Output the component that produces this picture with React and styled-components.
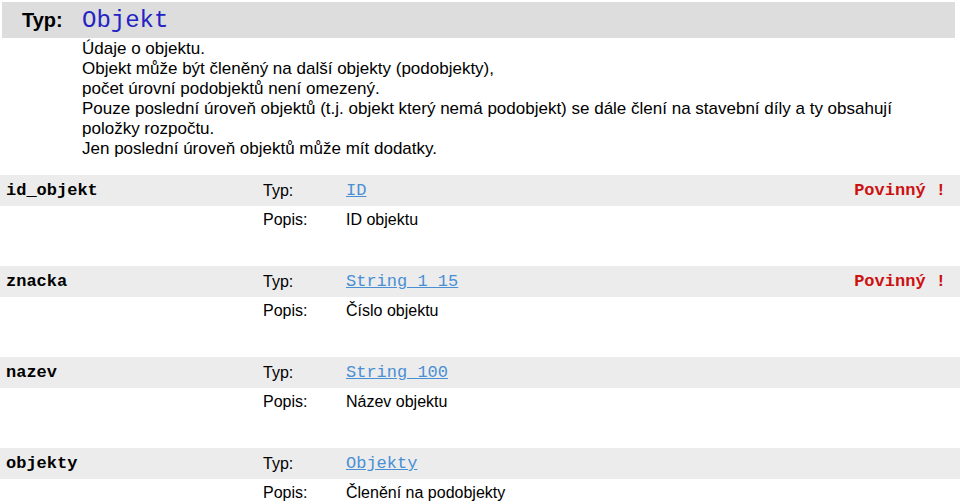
import React from "react";
import styled, { createGlobalStyle } from "styled-components";

const GlobalStyle = createGlobalStyle`
  body {
    margin: 0;
    background: #ffffff;
    font-family: "Liberation Sans", Arial, sans-serif;
    color: #000;
  }
`;

const Page = styled.div`
  width: 960px;
`;

const Header = styled.div`
  display: flex;
  align-items: center;
  height: 36px;
  margin: 2px 5px 0 2px;
  padding-left: 20px;
  background: #dddddd;
`;

const HeaderLabel = styled.span`
  font-size: 20px;
  font-weight: bold;
  width: 60px;
`;

const HeaderType = styled.span`
  font-family: "Liberation Mono", "Courier New", monospace;
  font-size: 24px;
  color: #2323c4;
`;

const Description = styled.div`
  padding: 1px 0 0 82px;
  font-size: 17px;
  line-height: 20px;
  margin-bottom: 16px;
`;

const Field = styled.div`
  display: grid;
  grid-template-columns: 263px 83px 1fr auto;
  grid-template-rows: 31px 28px;
  margin-bottom: 32px;
`;

const TypeRow = styled.div`
  display: contents;

  & > * {
    background: #ececec;
  }
`;

const Cell = styled.div`
  display: flex;
  align-items: center;
  font-size: 16px;
`;

const Name = styled(Cell)`
  padding-left: 6px;
  font-family: "Liberation Mono", "Courier New", monospace;
  font-weight: bold;
  font-size: 17px;
`;

const TypeLink = styled.a`
  font-family: "Liberation Mono", "Courier New", monospace;
  font-size: 17px;
  color: #4a8fd4;
  text-decoration: underline;
`;

const Required = styled(Cell)`
  padding-right: 14px;
  font-family: "Liberation Mono", "Courier New", monospace;
  font-weight: bold;
  font-size: 17px;
  color: #cc1111;
`;

const Blank = styled.div``;

const fields = [
  { name: "id_objekt", type: "ID", required: true, desc: "ID objektu" },
  { name: "znacka", type: "String_1_15", required: true, desc: "Číslo objektu" },
  { name: "nazev", type: "String_100", required: false, desc: "Název objektu" },
  { name: "objekty", type: "Objekty", required: false, desc: "Členění na podobjekty" },
];

export default function App() {
  return (
    <Page>
      <GlobalStyle />
      <Header>
        <HeaderLabel>Typ:</HeaderLabel>
        <HeaderType>Objekt</HeaderType>
      </Header>
      <Description>
        Údaje o objektu.
        <br />
        Objekt může být členěný na další objekty (podobjekty),
        <br />
        počet úrovní podobjektů není omezený.
        <br />
        Pouze poslední úroveň objektů (t.j. objekt který nemá podobjekt) se dále člení na stavební díly a ty obsahují
        <br />
        položky rozpočtu.
        <br />
        Jen poslední úroveň objektů může mít dodatky.
      </Description>
      {fields.map((f) => (
        <Field key={f.name}>
          <TypeRow>
            <Name>{f.name}</Name>
            <Cell>Typ:</Cell>
            <Cell>
              <TypeLink href="#">{f.type}</TypeLink>
            </Cell>
            <Required>{f.required ? "Povinný !" : ""}</Required>
          </TypeRow>
          <Blank />
          <Cell>Popis:</Cell>
          <Cell>{f.desc}</Cell>
          <Blank />
        </Field>
      ))}
    </Page>
  );
}
